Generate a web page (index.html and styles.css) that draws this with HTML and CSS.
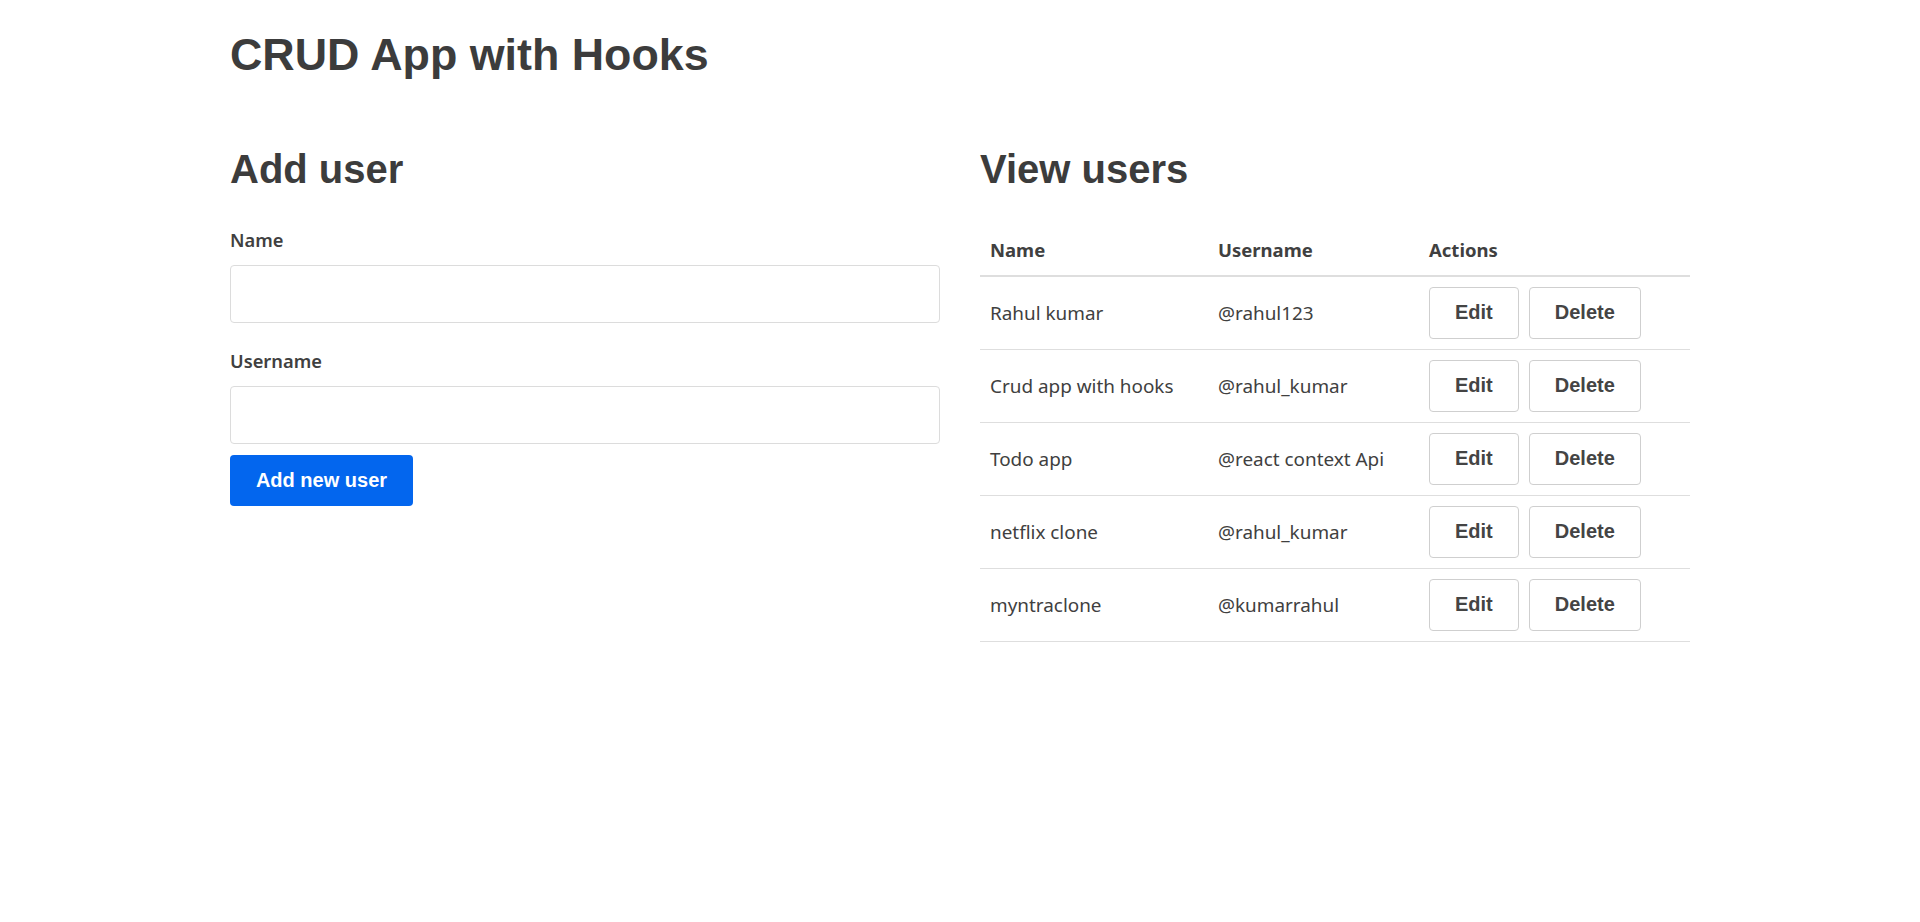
FILE: index.html
```html
<!DOCTYPE html>
<html lang="en">
<head>
<meta charset="utf-8">
<title>CRUD App with Hooks</title>
<link rel="stylesheet" href="styles.css">
</head>
<body>
<div class="container">
  <h1 class="title">CRUD App with Hooks</h1>
  <div class="columns">
    <section class="col">
      <h2 class="section-title">Add user</h2>
      <form class="form">
        <div class="field">
          <label class="form-label">Name</label>
          <input class="form-input" type="text" name="name">
        </div>
        <div class="field">
          <label class="form-label">Username</label>
          <input class="form-input" type="text" name="username">
        </div>
        <button class="btn-primary" type="button">Add new user</button>
      </form>
    </section>
    <section class="col">
      <h2 class="section-title">View users</h2>
      <table class="users">
        <colgroup>
          <col class="c-name"><col class="c-user"><col class="c-act">
        </colgroup>
        <thead>
          <tr><th>Name</th><th>Username</th><th>Actions</th></tr>
        </thead>
        <tbody>
          <tr><td>Rahul kumar</td><td>@rahul123</td><td><div class="actions"><button class="btn">Edit</button><button class="btn">Delete</button></div></td></tr>
          <tr><td>Crud app with hooks</td><td>@rahul_kumar</td><td><div class="actions"><button class="btn">Edit</button><button class="btn">Delete</button></div></td></tr>
          <tr><td>Todo app</td><td>@react context Api</td><td><div class="actions"><button class="btn">Edit</button><button class="btn">Delete</button></div></td></tr>
          <tr><td>netflix clone</td><td>@rahul_kumar</td><td><div class="actions"><button class="btn">Edit</button><button class="btn">Delete</button></div></td></tr>
          <tr><td>myntraclone</td><td>@kumarrahul</td><td><div class="actions"><button class="btn">Edit</button><button class="btn">Delete</button></div></td></tr>
        </tbody>
      </table>
    </section>
  </div>
</div>
</body>
</html>
```
FILE: styles.css
```css
* { box-sizing: border-box; }

html, body {
  margin: 0;
  padding: 0;
  background: #fff;
}

body {
  font-family: "Noto Sans", "Open Sans", sans-serif;
  font-size: 18px;
  color: #404040;
}

.container {
  width: 1460px;
  margin: 0 auto;
}

.title {
  font-family: "Liberation Sans", Arial, sans-serif;
  font-weight: 700;
  font-size: 44.8px;
  line-height: 1.2;
  margin: 28px 0 0;
  color: #3c3c3c;
}

.columns {
  display: grid;
  grid-template-columns: 710px 710px;
  column-gap: 40px;
  margin-top: 63px;
}

.section-title {
  font-family: "Liberation Sans", Arial, sans-serif;
  font-weight: 700;
  font-size: 40px;
  line-height: 48px;
  margin: 0 0 33px;
  color: #3c3c3c;
}

.form {
  display: flex;
  flex-direction: column;
  align-items: flex-start;
}

.field {
  width: 100%;
  display: flex;
  flex-direction: column;
}

.field + .field { margin-top: 24px; }

.form-label {
  font-weight: 600;
  font-size: 18.3px;
  line-height: 28px;
  margin-bottom: 11px;
}

.form-input {
  width: 100%;
  height: 58px;
  border: 1px solid #dcdcdc;
  border-radius: 4px;
  padding: 0 12px;
  font: inherit;
  background: #fff;
}

.btn-primary {
  margin-top: 11px;
  height: 51px;
  width: 183px;
  border: 0;
  border-radius: 4px;
  background: #0366ee;
  color: #fff;
  font-family: "Liberation Sans", Arial, sans-serif;
  font-weight: 700;
  font-size: 20px;
  padding: 0;
}

.users {
  width: 100%;
  border-collapse: collapse;
  table-layout: fixed;
}

.c-name { width: 228px; }
.c-user { width: 211px; }
.c-act { width: 271px; }

.users th {
  text-align: left;
  font-weight: 700;
  font-size: 18.5px;
  line-height: 28px;
  padding: 10px 10px 11px;
  border-bottom: 2px solid #dedede;
}

.users td {
  padding: 10px;
  font-size: 18.9px;
  line-height: 28px;
  vertical-align: middle;
  border-bottom: 1px solid #dedede;
}

.actions {
  display: flex;
  gap: 10px;
}

.btn {
  height: 52px;
  padding: 0 25px;
  background: #fff;
  border: 1px solid #cfcfcf;
  border-radius: 4px;
  color: #444;
  font-family: "Liberation Sans", Arial, sans-serif;
  font-weight: 700;
  font-size: 20px;
}
```
